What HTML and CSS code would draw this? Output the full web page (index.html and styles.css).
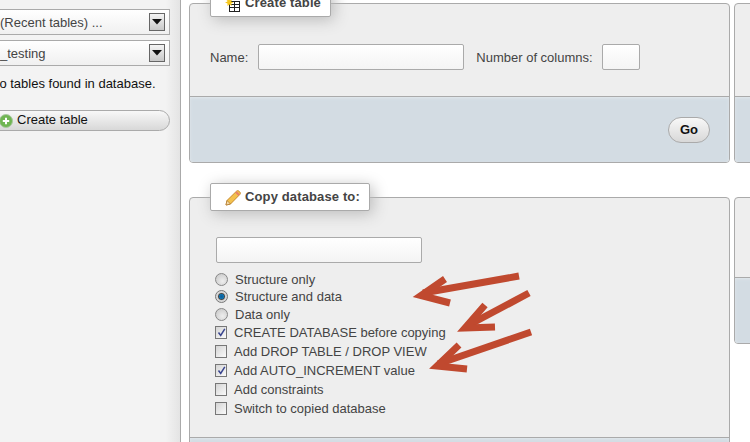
FILE: index.html
```html
<!DOCTYPE html>
<html lang="en">
<head>
<meta charset="utf-8">
<title>phpMyAdmin</title>
<link rel="stylesheet" href="styles.css">
</head>
<body>
<div class="page">
  <aside class="sidebar">
    <div class="select"><span class="select-text">(Recent tables) ...</span><span class="select-arrow"><svg width="10" height="6" viewBox="0 0 10 6"><path d="M0 0h10L5 5.5z" fill="#111"/></svg></span></div>
    <div class="select"><span class="select-text">_testing</span><span class="select-arrow"><svg width="10" height="6" viewBox="0 0 10 6"><path d="M0 0h10L5 5.5z" fill="#111"/></svg></span></div>
    <p class="side-note">No tables found in database.</p>
    <div class="side-button">
      <svg class="plus" width="14" height="14" viewBox="0 0 14 14"><circle cx="7" cy="7" r="6.5" fill="#6fb552" stroke="#a9c9a0"/><path d="M7 3.8v6.4M3.8 7h6.4" stroke="#fff" stroke-width="2"/></svg>
      <span class="side-button-text">Create table</span>
    </div>
  </aside>

  <main class="main">
    <div class="column">
      <section class="panel">
        <div class="legend">
          <svg class="legend-icon" width="16" height="16" viewBox="0 0 16 16"><rect x="4.500" y="5.500" width="10" height="10" fill="#fff" stroke="#222"/><path d="M4.500 8.500h10M4.500 11.500h10M9.500 5.500v10" stroke="#222"/><path d="M4 2l1 2.500L7.500 3 6 5.500 8.500 6.500 6 7.500 7 10 4.500 8.500 2.500 10 2.500 7.500 0 6.500 2.500 5.500 1 3l2 1.500z" fill="#f7c81e"/></svg>
          <span>Create table</span>
        </div>
        <div class="create-body">
          <span class="field-label">Name:</span>
          <span class="input input-name"></span>
          <span class="field-label field-gap">Number of columns:</span>
          <span class="input input-cols"></span>
        </div>
        <div class="footer footer-go"><span class="go">Go</span></div>
      </section>
      <section class="panel panel-copy">
        <div class="legend">
          <svg class="legend-icon" width="16" height="16" viewBox="0 0 16 16"><path d="M1 15l1-4.500L11.500 1.200c.8-.8 1.800-.7 2.500 0l.8.800c.7.7.8 1.700 0 2.500L5.500 14z" fill="#f3c14d" stroke="#c98a2a"/><path d="M1 15l1-4.500L5.500 14z" fill="#f6dcae" stroke="#a9752c" stroke-width=".7"/><path d="M11 2l3 3" stroke="#e87f6a" stroke-width="2"/></svg>
          <span>Copy database to:</span>
        </div>
        <div class="copy-body">
          <span class="input input-db"></span>
          <div class="options">
            <div class="opt radio-row"><span class="radio"></span><span>Structure only</span></div>
            <div class="opt radio-row"><span class="radio radio-on"></span><span>Structure and data</span></div>
            <div class="opt radio-row"><span class="radio"></span><span>Data only</span></div>
            <div class="opt check-row"><span class="check"><svg width="9" height="9" viewBox="0 0 9 9"><path d="M1.500 4.500l2.200 3L7.800 .8" fill="none" stroke="#39458f" stroke-width="1.500"/></svg></span><span>CREATE DATABASE before copying</span></div>
            <div class="opt check-row"><span class="check"></span><span>Add DROP TABLE / DROP VIEW</span></div>
            <div class="opt check-row"><span class="check"><svg width="9" height="9" viewBox="0 0 9 9"><path d="M1.500 4.500l2.200 3L7.800 .8" fill="none" stroke="#39458f" stroke-width="1.500"/></svg></span><span>Add AUTO_INCREMENT value</span></div>
            <div class="opt check-row"><span class="check"></span><span>Add constraints</span></div>
            <div class="opt check-row"><span class="check"></span><span>Switch to copied database</span></div>
          </div>
        </div>
        <div class="footer footer-copy"></div>
      </section>
    </div>
    <div class="column">
      <section class="panel">
        <div class="side-body-a"></div>
        <div class="footer"></div>
      </section>
      <section class="panel panel-side">
        <div class="side-body-b"></div>
        <div class="footer"></div>
      </section>
    </div>
  </main>

  <svg class="arrows" width="750" height="442" viewBox="0 0 750 442" fill="none" stroke="#c0492f" stroke-width="7">
    <path d="M519 276L423 293"/><path d="M445 279L421 295.500L450 303" stroke-miterlimit="8"/>
    <path d="M529 293L467 326"/><path d="M485 305L465 328L495 327" stroke-miterlimit="8"/>
    <path d="M531 332L438 364"/><path d="M459 345L437 366L467 369" stroke-miterlimit="8"/>
  </svg>
</div>
</body>
</html>
```
FILE: styles.css
```css
* { box-sizing: border-box; }
html, body { margin: 0; padding: 0; }
body { font-family: "Liberation Sans", Arial, sans-serif; font-size: 13px; color: #444; background: #fff; }
.page { position: relative; display: flex; width: 750px; height: 442px; overflow: hidden; }

.sidebar { flex: 0 0 181px; height: 442px; padding: 9px 10px 0 0; background: linear-gradient(to right, #f3f3f3 0, #f3f3f3 92%, #e4e4e4 100%); border-right: 1px solid #aaa; overflow: hidden; }
.select { display: flex; align-items: center; justify-content: space-between; height: 26px; margin: 0 0 5px -9px; padding: 0 4px 0 8px; border: 1px solid #aaa; background: linear-gradient(#fff, #f0f0f0); color: #444; }
.select-arrow { display: flex; align-items: center; justify-content: center; width: 16px; height: 18px; border: 1px solid #666; background: linear-gradient(#f4f4f4, #c8c8c8); }
.side-note { margin: 10px 0 0 -10px; color: #111; line-height: 16px; white-space: nowrap; }
.side-button { display: flex; align-items: center; gap: 4px; height: 21px; margin: 18px 0 0 -2px; border: 1px solid #aaa; border-radius: 0 11px 11px 0; background: linear-gradient(#f8f8f8, #d8d8d8); color: #111; }
.side-button-text { margin-bottom: 3px; }
.plus { flex: none; }

.main { flex: 1; min-width: 0; display: flex; gap: 4px; padding: 3px 0 0 8px; overflow: hidden; }
.column { flex: 0 0 541px; display: flex; flex-direction: column; gap: 34px; }
.panel { flex: none; height: 160px; border: 1px solid #aaa; border-radius: 4px; background: #eee; display: flex; flex-direction: column; }
.panel-copy { height: 300px; }
.panel-side { height: 147px; }

.legend { align-self: flex-start; display: flex; align-items: center; gap: 4px; height: 28px; margin: -15px 0 0 20px; padding: 0 9px 1px 14px; border: 1px solid #aaa; border-radius: 2px; background: #fff; box-shadow: 3px 3px 15px #bbb; font-weight: bold; letter-spacing: .13px; color: #444; white-space: nowrap; }
.legend-icon { flex: none; margin-top: 2px; }

.create-body { flex: 0 0 79px; padding: 1px 0 0 20px; display: flex; align-items: center; }
.field-label { color: #444; white-space: nowrap; }
.field-gap { margin-left: 12px; }
.input { display: block; height: 26px; border: 1px solid #aaa; border-radius: 2px; background: linear-gradient(#fff, #f4f4f4); }
.input-name { width: 206px; margin-left: 10px; }
.input-cols { width: 38px; margin-left: 9px; }
.input-db { width: 206px; }

.footer { flex: 1; background: #d3dce3; border-top: 1px solid #aaa; border-radius: 0 0 3px 3px; box-shadow: inset 0 1px 3px #e2e8ec; }
.footer-go { display: flex; justify-content: flex-end; align-items: center; padding: 0 19px 0 0; }
.go { display: flex; align-items: center; justify-content: center; width: 42px; height: 26px; border: 1px solid #aaa; border-radius: 13px; background: linear-gradient(#f8f8f8, #d8d8d8); color: #111; font-weight: bold; }

.side-body-a { flex: 0 0 92px; }
.side-body-b { flex: 0 0 79px; }

.copy-body { flex: 0 0 226px; padding: 26px 0 0 26px; }
.options { margin: 7.4px 0 0 -1px; color: #444; }
.opt { display: flex; align-items: center; gap: 7px; white-space: nowrap; }
.radio-row { height: 17.5px; }
.check-row { height: 19px; }
.radio { flex: none; width: 13px; height: 13px; border: 1px solid #888; border-radius: 50%; background: radial-gradient(circle at 60% 65%, #eee, #c4c4c4); }
.radio-on { background: radial-gradient(circle, #0a5f9e 0, #1272ad 30%, #444 38%, #d4d4d4 52%, #e4e4e4 100%); border-color: #777; }
.check { flex: none; display: flex; align-items: center; justify-content: center; width: 12px; height: 13px; border: 1px solid #777; background: linear-gradient(135deg, #d4d4d4, #fafafa); }

.arrows { position: absolute; top: 0; left: 0; pointer-events: none; }
```
